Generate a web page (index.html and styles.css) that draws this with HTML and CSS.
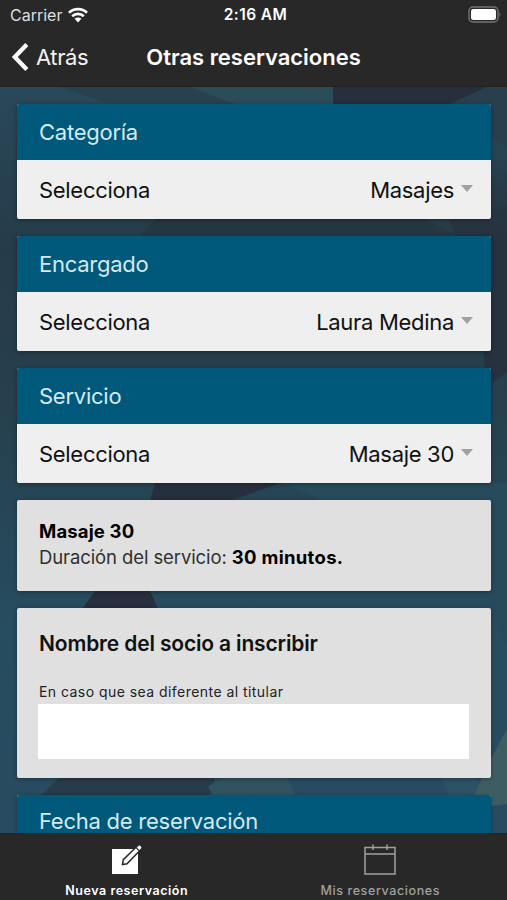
FILE: index.html
```html
<!DOCTYPE html>
<html lang="es">
<head>
<meta charset="utf-8">
<title>Otras reservaciones</title>
<link rel="stylesheet" href="styles.css">
</head>
<body>
<div class="screen">
  <header class="top">
    <div class="status">
      <div class="carrier"><span>Carrier</span>
        <svg width="20" height="16" viewBox="0 0 20 16"><g fill="none" stroke="#fff" stroke-width="2.7"><path d="M1 5.7A13 13 0 0 1 19 5.7"/><path d="M4.2 9.2A8.4 8.4 0 0 1 15.8 9.2"/></g><path d="M6.6 11.8a4.9 4.9 0 0 1 6.8 0L10 15.4Z" fill="#fff"/></svg>
      </div>
      <div class="time">2:16 AM</div>
      <div class="battery"><svg width="34" height="18" viewBox="0 0 34 18"><rect x="2" y="1" width="29" height="15" rx="4" fill="none" stroke="#747474" stroke-width="1.4"/><rect x="4" y="3" width="25" height="11" rx="2.3" fill="#fff"/><path d="M32.5 6.3q2 2.3 0 4.6Z" fill="#747474"/></svg></div>
    </div>
    <nav class="nav">
      <div class="back"><svg width="18" height="28" viewBox="0 0 18 28"><path d="M15.8 1.6 3.8 14 15.8 26.4" fill="none" stroke="#fff" stroke-width="4.3"/></svg><span>Atrás</span></div>
      <h1>Otras reservaciones</h1>
      <div></div>
    </nav>
  </header>
  <main class="content">
    <svg class="backdrop" viewBox="0 0 507 746" preserveAspectRatio="none">
      <defs>
        <linearGradient id="sea" x1="0" y1="0" x2="0" y2="1"><stop offset="0" stop-color="#29485a"/><stop offset=".22" stop-color="#263b49"/><stop offset=".45" stop-color="#26414f"/><stop offset=".72" stop-color="#264d60"/><stop offset="1" stop-color="#294b61"/></linearGradient>
        <linearGradient id="shade" x1="0" y1="0" x2="0" y2="1"><stop offset="0" stop-color="#27323f" stop-opacity="0"/><stop offset=".35" stop-color="#27323f"/><stop offset="1" stop-color="#27323f"/></linearGradient>
      </defs>
      <rect width="507" height="746" fill="url(#sea)"/>
      <path d="M190 0H333V17H235Z" fill="#2b4c59"/>
      <path d="M333 0H487L440 22H333Z" fill="#272f3d"/>
      <path d="M487 0H507V60L440 22Z" fill="#293f4d"/>
      <path d="M60 0H190L235 17H110Z" fill="#29414f"/>
      <path d="M155 132H425L460 150H140Z" fill="#253743"/>
      <path d="M420 70H507V285L488 300L470 180Z" fill="url(#shade)"/>
      <path d="M155 396H280L230 414H150Z" fill="#262f3e"/>
      <path d="M280 396H507V560L470 470Z" fill="#274b5b"/>
      <path d="M95 504H150L158 522H82Z" fill="#272f3e"/>
      <path d="M60 690H215L210 709H40Z" fill="#273b4a"/>
      <path d="M225 690H287L296 709H213L208 699Z" fill="#315360"/>
      <path d="M440 690H475L490 709H450Z" fill="#2b5363"/>
      <path d="M507 642Q486 680 474 709L490 719 507 717Z" fill="#3e5d63"/>
    </svg>
    <section class="card picker">
      <h2>Categoría</h2>
      <div class="row"><span>Selecciona</span><span class="value">Masajes</span><i></i></div>
    </section>
    <section class="card picker">
      <h2>Encargado</h2>
      <div class="row"><span>Selecciona</span><span class="value">Laura Medina</span><i></i></div>
    </section>
    <section class="card picker">
      <h2>Servicio</h2>
      <div class="row"><span>Selecciona</span><span class="value">Masaje 30</span><i></i></div>
    </section>
    <section class="card detail"><b>Masaje 30</b><p>Duración del servicio: <b>30 minutos.</b></p></section>
    <section class="card member">
      <h3>Nombre del socio a inscribir</h3>
      <label for="member">En caso que sea diferente al titular</label>
      <input id="member" type="text">
    </section>
    <section class="card picker date"><h2>Fecha de reservación</h2></section>
  </main>
  <footer class="tabs">
    <div class="tab active">
      <svg width="34" height="32" viewBox="0 0 34 32"><path d="M2 5H28V30H2Z" fill="#fff"/><path d="M12.5 20.5 13.3 15.7 28.1 1.3Q29.5 0 31.2 1.7T31.6 4.8L17 19.8Z" fill="#fff" stroke="#282828" stroke-width="1.5"/><path d="m26 3.5 3.4 3.4" stroke="#282828" stroke-width="1.2"/></svg>
      <span>Nueva reservación</span>
    </div>
    <div class="tab">
      <svg width="34" height="32" viewBox="0 0 34 32"><path d="M2 3.5H32V30H2ZM2 10H32M10 .5V6M24 .5V6" fill="none" stroke="#a0a0a0" stroke-width="1.5"/></svg>
      <span>Mis reservaciones</span>
    </div>
  </footer>
</div>
</body>
</html>
```
FILE: styles.css
```css
* { box-sizing: border-box; }
body { margin: 0; font-family: Inter, "Liberation Sans", sans-serif; background: #282828; }
h1, h2, h3, p { margin: 0; }
svg { display: block; flex: none; }
.screen { width: 507px; height: 900px; display: flex; flex-direction: column; overflow: hidden; }
.top { height: 87px; flex: none; background: #282828; color: #fff; border-bottom: 1px solid #202224; }
.status { height: 29px; padding: 0 6px 0 10px; display: grid; grid-template-columns: 1fr auto 1fr; align-items: center; font-size: 16px; }
.carrier { display: flex; align-items: center; gap: 6px; color: #dedede; letter-spacing: 0; }
.time { font-weight: 600; font-size: 15.5px; letter-spacing: .45px; }
.battery { justify-self: end; }
.nav { height: 56px; padding: 0 11px; display: grid; grid-template-columns: 1fr auto 1fr; align-items: center; }
.back { display: flex; align-items: center; gap: 7px; font-size: 22px; letter-spacing: -.4px; color: #f2f2f2; }
.nav h1 { font-size: 22px; line-height: 28px; font-weight: 600; letter-spacing: -.02px; }
.content { position: relative; flex: 1; min-height: 0; overflow: hidden; padding: 17px 16px 0 17px; display: flex; flex-direction: column; }
.backdrop { position: absolute; left: 0; top: 0; width: 100%; height: 100%; }
.card { position: relative; flex: none; border-radius: 2px; overflow: hidden; box-shadow: 0 1px 4px rgba(0,0,0,.35); background: #e0e0e0; color: #111; }
.picker { height: 115px; margin-bottom: 17px; background: #efefef; }
.picker h2 { height: 56px; padding-left: 22px; line-height: 56px; background: #00587a; color: #d4eaf2; font-weight: 400; font-size: 22px; letter-spacing: -.25px; }
.date h2 { line-height: 52px; }
.row { height: 60px; padding: 0 18px 0 22px; display: flex; align-items: center; font-size: 22px; letter-spacing: -.3px; }
.value { margin-left: auto; }
.row i { margin: -4px 0 0 7px; border: 6.5px solid transparent; border-top: 7px solid #a0a0a0; border-bottom: 0; }
.detail { height: 91px; margin-bottom: 17px; padding: 18px 22px; font-size: 18.5px; line-height: 26px; letter-spacing: -.1px; }
.detail b { font-weight: 700; letter-spacing: .15px; color: #000; }
.detail p b { letter-spacing: .3px; }
.detail p { color: #303030; }
.member { height: 170px; margin-bottom: 17px; padding: 22px 21px 0; }
.member h3 { padding-left: 1px; font-size: 21px; line-height: 28px; font-weight: 600; letter-spacing: -.16px; }
.member label { display: block; margin-top: 24px; padding-left: 1px; font-size: 14px; line-height: 20px; letter-spacing: .45px; color: #222; }
.member input { display: block; width: 431px; height: 55px; margin: 2px 0 0; border: 0; padding: 0 10px; background: #fff; font: 20px Inter, sans-serif; }
.tabs { height: 67px; flex: none; display: flex; background: #282828; border-top: 1px solid #1f2325; }
.tab { flex: 1; padding-top: 10px; display: flex; flex-direction: column; align-items: center; color: #a0a0a0; font-size: 12.5px; line-height: 18px; font-weight: 500; letter-spacing: .6px; }
.tab span { margin-top: 6px; }
.active { color: #fff; font-weight: 600; letter-spacing: .55px; }
```
